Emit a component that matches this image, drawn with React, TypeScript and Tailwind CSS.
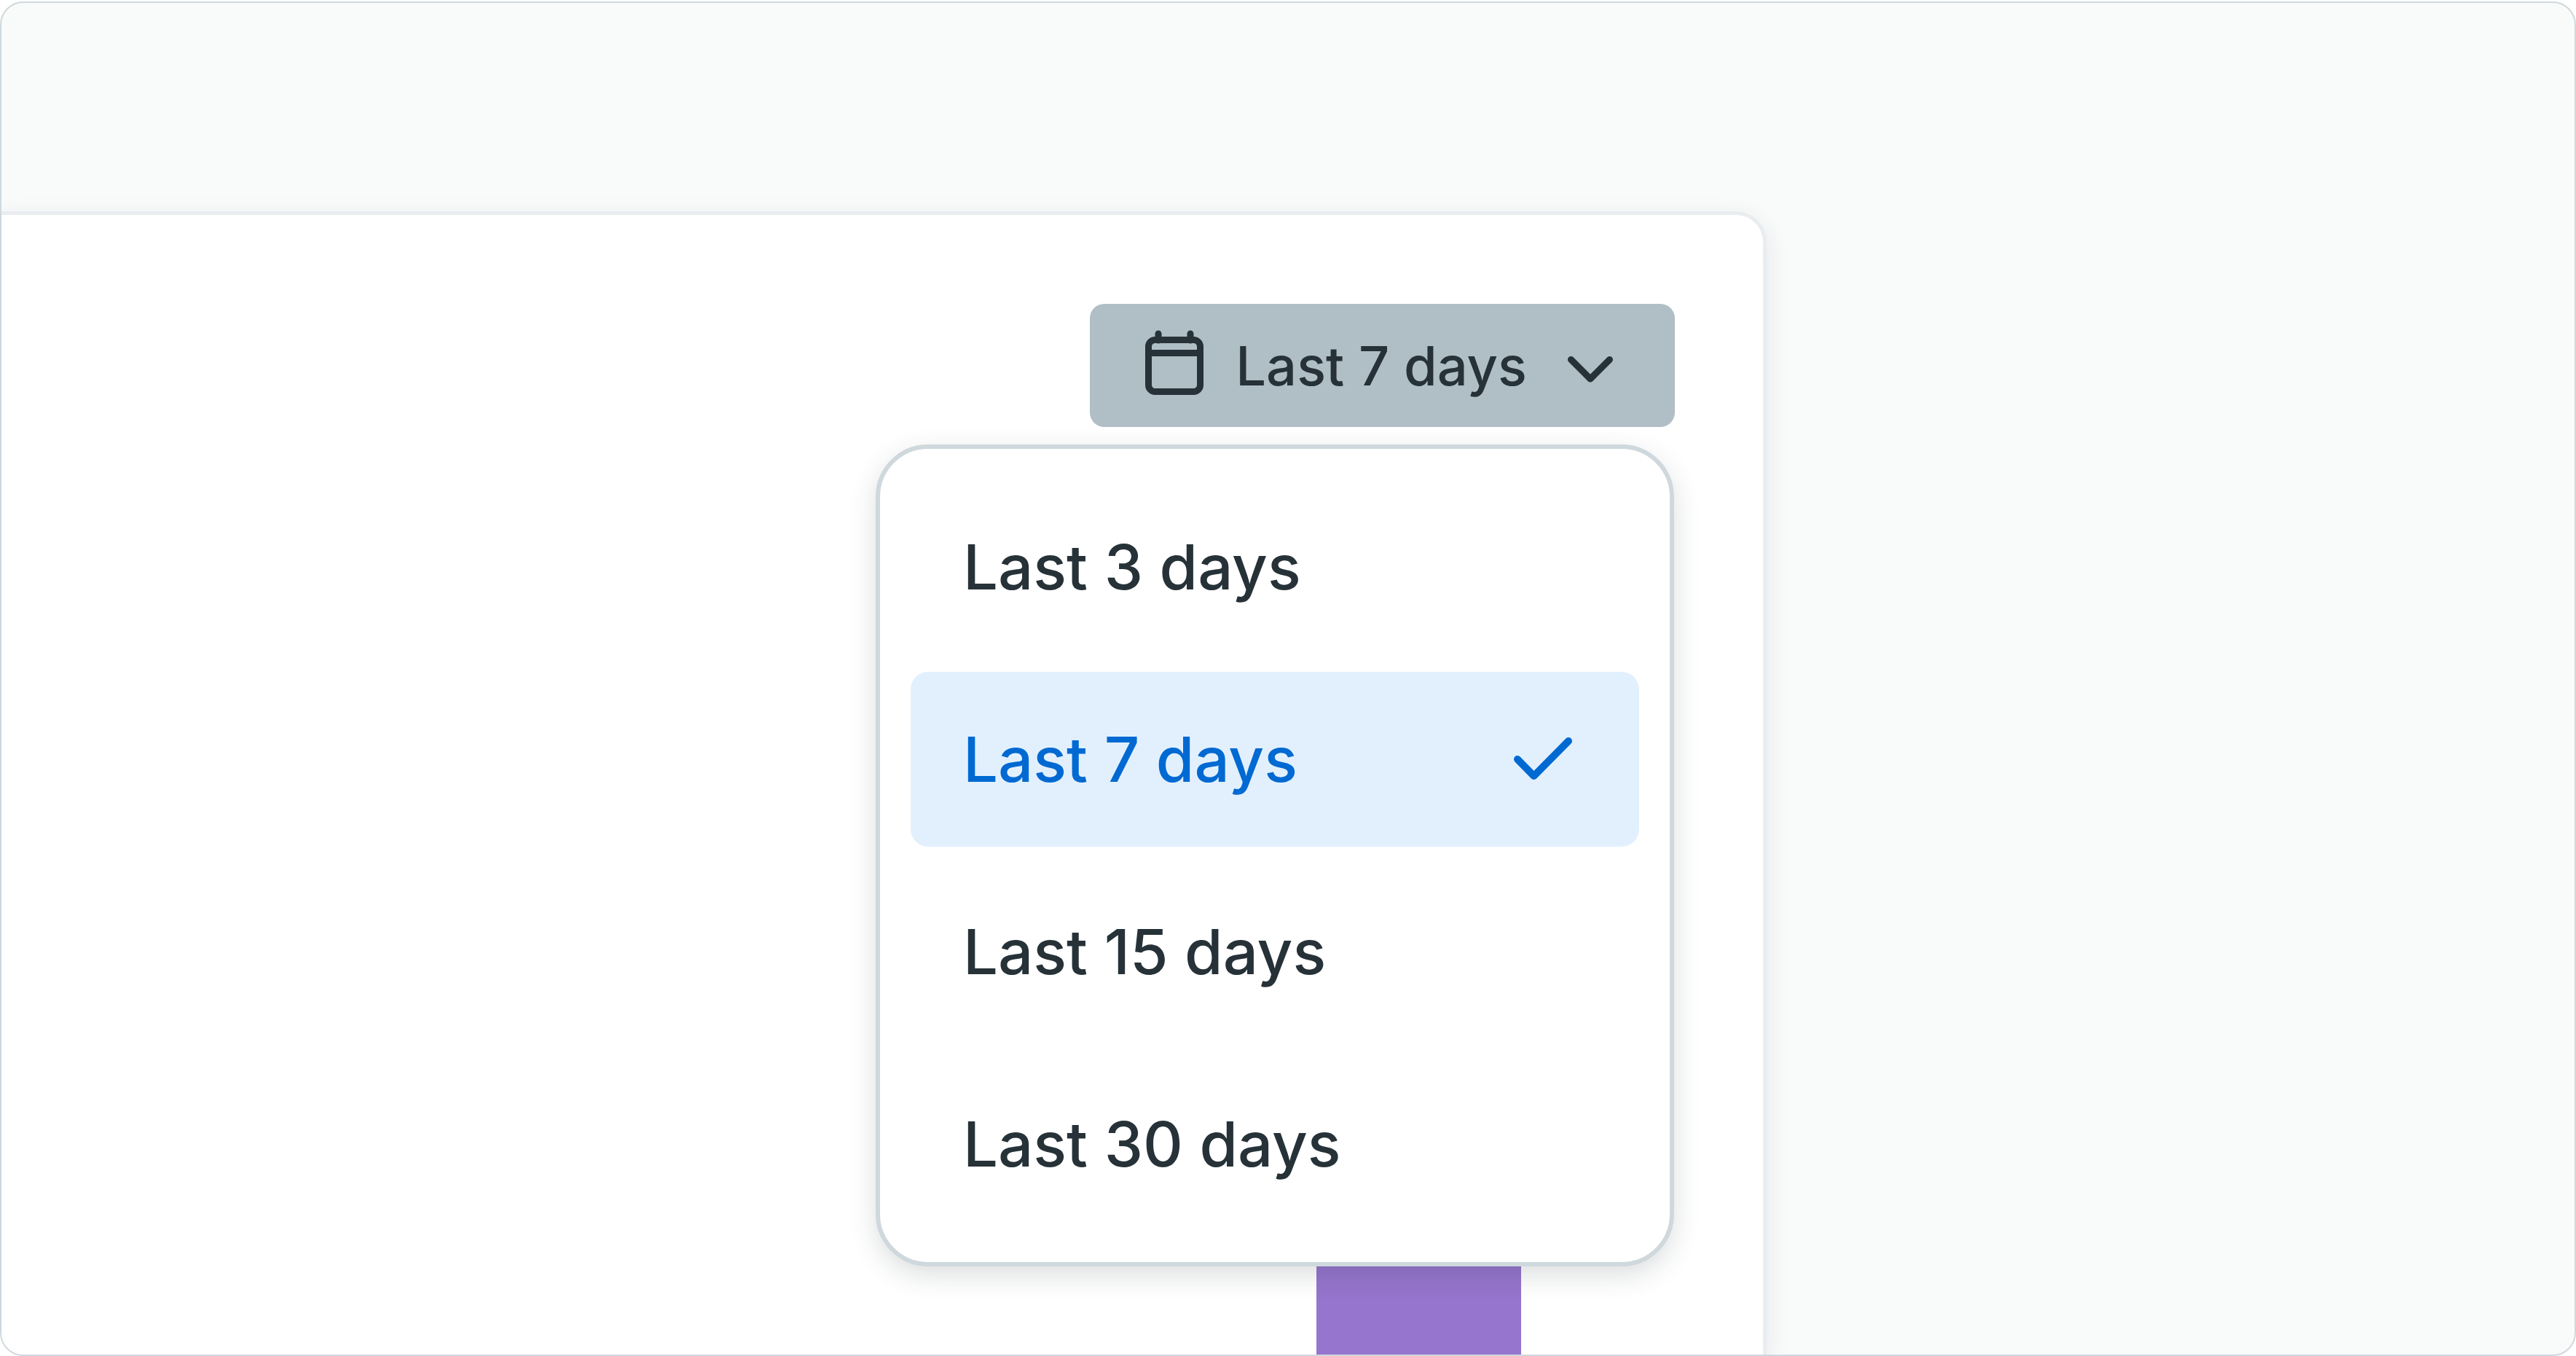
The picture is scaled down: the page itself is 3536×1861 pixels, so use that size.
import { useState } from "react";

const RANGES = ["Last 3 days", "Last 7 days", "Last 15 days", "Last 30 days"];

function CalendarIcon() {
  return (
    <svg aria-hidden="true" width="80" height="98" viewBox="0 0 80 98" fill="none" stroke="currentColor" strokeWidth="9">
      <rect x="4.5" y="13.5" width="71" height="71" rx="9" />
      <path d="M4.5 31.5H75.5" />
      <path d="M18 14V5M62 14V5" strokeLinecap="round" />
    </svg>
  );
}

function ChevronIcon() {
  return (
    <svg
      aria-hidden="true"
      width="62"
      height="46"
      viewBox="0 0 62 46"
      fill="none"
      stroke="currentColor"
      strokeWidth="9"
      strokeLinecap="round"
      strokeLinejoin="round"
    >
      <path d="M4.5 14.5L31 41L57.5 14.5" />
    </svg>
  );
}

function CheckIcon() {
  return (
    <svg
      aria-hidden="true"
      width="80"
      height="60"
      viewBox="0 0 80 60"
      fill="none"
      stroke="currentColor"
      strokeWidth="10"
      strokeLinecap="round"
      strokeLinejoin="round"
    >
      <path d="M5 30L27.5 53L75 5" />
    </svg>
  );
}

function RangePicker() {
  const [selected, setSelected] = useState("Last 7 days");

  return (
    <div className="relative">
      <button
        type="button"
        aria-haspopup="menu"
        aria-expanded="true"
        className="flex h-[169px] items-center rounded-[20px] bg-[#b0bec5] pr-[85px] pl-[76px] text-[74px] leading-none font-medium whitespace-nowrap text-[#263238]"
      >
        <CalendarIcon />
        <span className="mr-[56px] ml-[44px]">{selected}</span>
        <ChevronIcon />
      </button>

      <div
        role="menu"
        className="absolute top-full right-px mt-[24px] flex w-[1096px] flex-col gap-[24px] rounded-[72px] border-[6px] border-[#cfd8dc] bg-white p-[42px] shadow-[0_12px_36px_rgba(38,50,56,0.16)]"
      >
        {RANGES.map((range) => {
          const active = range === selected;
          return (
            <button
              key={range}
              type="button"
              role="menuitemradio"
              aria-checked={active}
              onClick={() => setSelected(range)}
              className={
                active
                  ? "flex h-[240px] items-center justify-between rounded-[24px] bg-[#e2f0fe] pr-[92px] pl-[72px] text-[85px] leading-none font-medium text-[#0069d2]"
                  : "flex h-[240px] items-center justify-between rounded-[24px] pr-[92px] pl-[72px] text-[85px] leading-none font-medium text-[#263238]"
              }
            >
              {range}
              {active && <CheckIcon />}
            </button>
          );
        })}
      </div>
    </div>
  );
}

export default function App() {
  return (
    <div className="flex min-h-screen flex-col bg-white pt-[2px] font-['Inter',sans-serif]">
      <main className="flex flex-1 flex-col overflow-hidden rounded-[32px] border-2 border-[#cfd8dc] bg-[#f9fbfa] pt-[286px]">
        <section className="flex w-[68.6%] flex-1 flex-col justify-between rounded-tr-[42px] border-t-[5px] border-r-[5px] border-[#e9edf0] bg-white pt-[122px] shadow-[0_10px_32px_rgba(38,50,90,0.1)]">
          <div className="flex justify-end pr-[121px]">
            <RangePicker />
          </div>
          <div className="flex justify-end pr-[332px]">
            <div className="h-[420px] w-[281px] bg-[#9575cd]" />
          </div>
        </section>
      </main>
    </div>
  );
}
